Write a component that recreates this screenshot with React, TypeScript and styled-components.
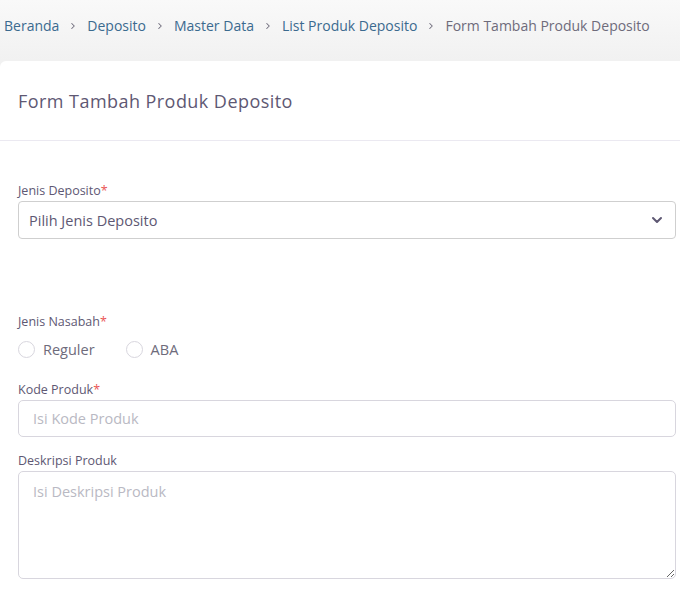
import React from "react";
import styled, { createGlobalStyle } from "styled-components";

const Global = createGlobalStyle`
  html, body { margin: 0; padding: 0; }
  body {
    font-family: "Open Sans", "Noto Sans", sans-serif;
    background: #ffffff;
    width: 680px;
    overflow: hidden;
  }
  * { box-sizing: border-box; }
`;

const Page = styled.div`
  display: flex;
  flex-direction: column;
  width: 680px;
  height: 594px;
  background: linear-gradient(#f9f9f9, #f1f1f1 60px);
`;

const Breadcrumb = styled.nav`
  display: flex;
  align-items: center;
  height: 61px;
  padding: 0 0 10px 4px;
  font-size: 14px;
  white-space: nowrap;
`;

const Crumb = styled.span<{ $active?: boolean }>`
  color: ${(p) => (p.$active ? "#6e6b7b" : "#3b6a8f")};
`;

const Sep = styled.span`
  display: inline-flex;
  align-items: center;
  margin: 0 9px;
`;

const Card = styled.section`
  flex: 1;
  background: #ffffff;
  border-radius: 6px 0 0 0;
  margin-right: -10px;
`;

const CardHeader = styled.header`
  height: 80px;
  display: flex;
  align-items: center;
  padding: 0 18px;
  border-bottom: 1px solid #ebe9f1;
`;

const Title = styled.h1`
  margin: 0;
  font-size: 18px;
  font-weight: 500;
  letter-spacing: 0.45px;
  color: #5e5873;
`;

const Body = styled.div`
  display: flex;
  flex-direction: column;
  padding: 41px 14px 0 18px;
`;

const Field = styled.div<{ $mb?: number }>`
  display: flex;
  flex-direction: column;
  margin-bottom: ${(p) => p.$mb ?? 14}px;
`;

const Label = styled.label`
  font-size: 12.5px;
  color: #5e5873;
  line-height: 17px;
  margin-bottom: 2px;
`;

const Req = styled.span`
  color: #ea5455;
`;

const SelectBox = styled.div`
  height: 38px;
  border: 1px solid #cfcfcf;
  border-radius: 4px;
  display: flex;
  align-items: center;
  justify-content: space-between;
  padding: 0 10px 0 10px;
  font-size: 14.5px;
  color: #5e5873;
`;

const Input = styled.input`
  height: 37px;
  border: 1px solid #d8d6de;
  border-radius: 5px;
  padding: 0 14px;
  font-family: inherit;
  font-size: 14.5px;
  color: #6e6b7b;
  outline: none;
  &::placeholder { color: #b9b9c3; }
`;

const TextArea = styled.textarea`
  height: 108px;
  border: 1px solid #d8d6de;
  border-radius: 5px;
  padding: 10px 14px;
  font-family: inherit;
  font-size: 14.5px;
  color: #6e6b7b;
  outline: none;
  resize: vertical;
  &::placeholder { color: #b9b9c3; }
`;

const RadioRow = styled.div`
  display: flex;
  align-items: center;
  gap: 31px;
  margin-top: 8px;
`;

const RadioItem = styled.label`
  display: flex;
  align-items: center;
  gap: 8px;
  font-size: 14.5px;
  color: #6e6b7b;
`;

const RadioCircle = styled.span`
  width: 17px;
  height: 17px;
  border-radius: 50%;
  border: 1px solid #d8d6de;
  background: #fff;
`;

const Chevron = () => (
  <svg width="16" height="16" viewBox="0 0 24 24" fill="none" stroke="#5e5873" strokeWidth="3" strokeLinecap="round" strokeLinejoin="round">
    <polyline points="6 9 12 15 18 9" />
  </svg>
);

const SepIcon = () => (
  <svg width="10" height="10" viewBox="0 0 24 24" fill="none" stroke="#6e6b7b" strokeWidth="2.5" strokeLinecap="round" strokeLinejoin="round">
    <polyline points="9 6 15 12 9 18" />
  </svg>
);

export default function App() {
  const crumbs = ["Beranda", "Deposito", "Master Data", "List Produk Deposito"];
  return (
    <>
      <Global />
      <Page>
        <Breadcrumb>
          {crumbs.map((c) => (
            <React.Fragment key={c}>
              <Crumb>{c}</Crumb>
              <Sep><SepIcon /></Sep>
            </React.Fragment>
          ))}
          <Crumb $active>Form Tambah Produk Deposito</Crumb>
        </Breadcrumb>
        <Card>
          <CardHeader>
            <Title>Form Tambah Produk Deposito</Title>
          </CardHeader>
          <Body>
            <Field $mb={74}>
              <Label>Jenis Deposito<Req>*</Req></Label>
              <SelectBox>
                <span>Pilih Jenis Deposito</span>
                <Chevron />
              </SelectBox>
            </Field>
            <Field $mb={22}>
              <Label>Jenis Nasabah<Req>*</Req></Label>
              <RadioRow>
                <RadioItem><RadioCircle />Reguler</RadioItem>
                <RadioItem><RadioCircle />ABA</RadioItem>
              </RadioRow>
            </Field>
            <Field $mb={15}>
              <Label>Kode Produk<Req>*</Req></Label>
              <Input placeholder="Isi Kode Produk" />
            </Field>
            <Field>
              <Label>Deskripsi Produk</Label>
              <TextArea placeholder="Isi Deskripsi Produk" />
            </Field>
          </Body>
        </Card>
      </Page>
    </>
  );
}
